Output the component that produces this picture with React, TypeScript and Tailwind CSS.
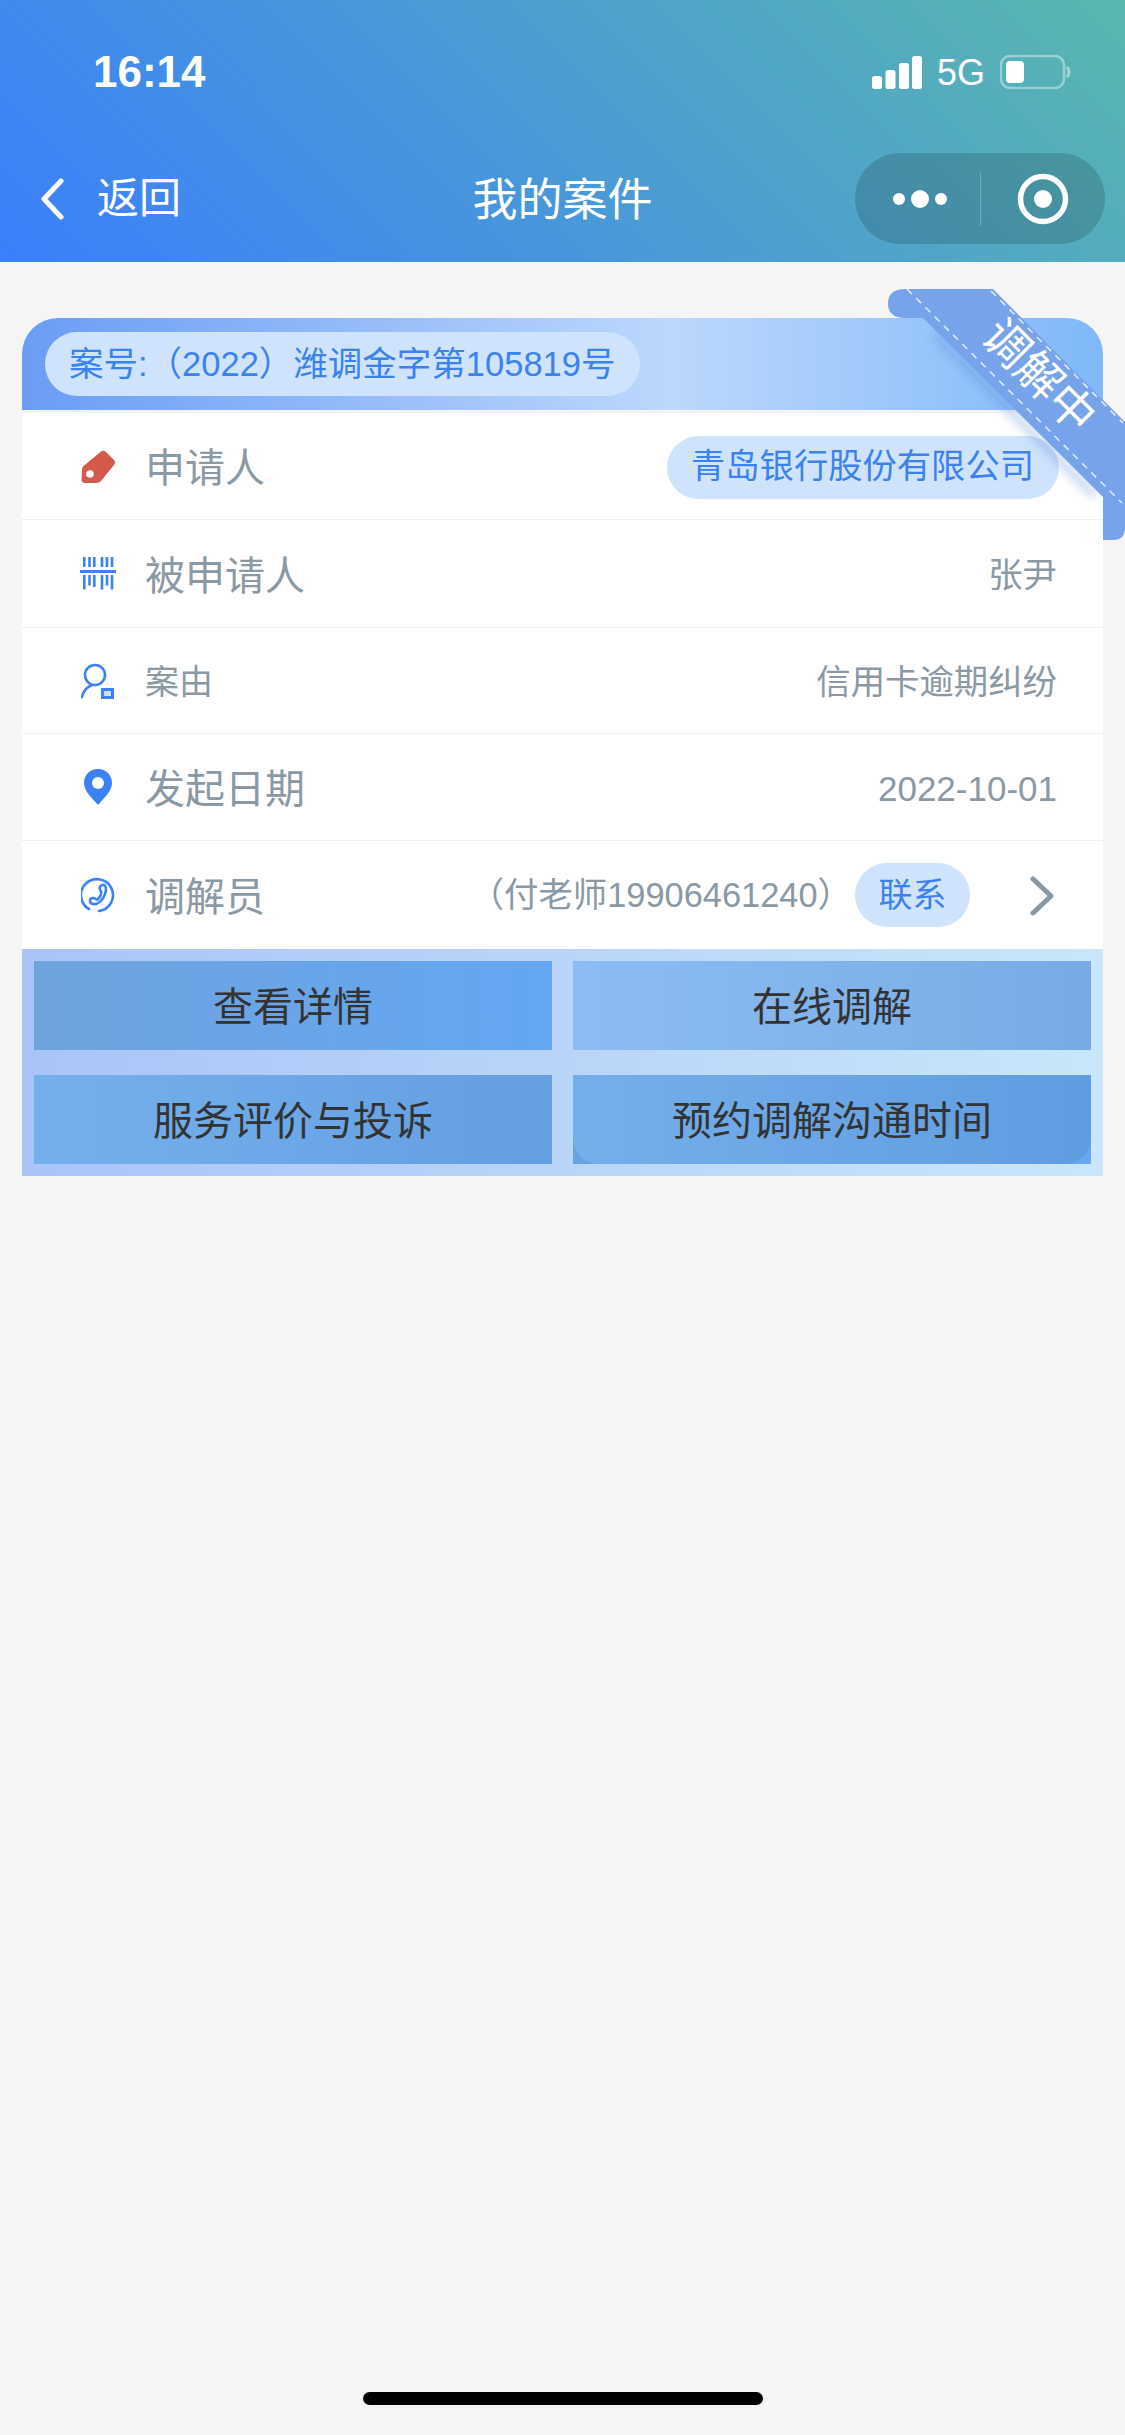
import React from "react";

const Row = ({ icon, label, labelClass, children, rowClass }: { icon: React.ReactNode; label: string; labelClass: string; children: React.ReactNode; rowClass: string }) => (
  <div className={`flex items-center justify-between pl-[60px] pr-[46px] ${rowClass}`}>
    <div className="flex items-center">
      <div className="flex w-[63px] items-center">{icon}</div>
      <span className={`relative top-[2px] text-[#8a99a3] ${labelClass}`}>{label}</span>
    </div>
    <div className="relative top-[1px] flex items-center text-[34.4px] text-[#8a99a3]">{children}</div>
  </div>
);

const Btn = ({ text, cls }: { text: string; cls: string }) => (
  <div className={`flex h-[89px] items-center justify-center pt-[2px] text-[40px] text-[#333333] ${cls}`}>{text}</div>
);

export default function App() {
  return (
    <div className="flex min-h-[2435px] flex-col bg-[#f5f5f5] font-['Liberation_Sans','Noto_Sans_CJK_SC',sans-serif]">
      <header className="h-[262px] bg-[linear-gradient(45deg,#3a7ffc,#5ab7ae)] text-white">
        <div className="flex h-[144px] items-start justify-between pl-[93px] pr-[53px] pt-[47px]">
          <span className="text-[44px] font-bold leading-[50px]">16:14</span>
          <div className="mt-[6px] flex items-center">
            <svg width="50" height="33" viewBox="0 0 50 33" fill="#fff">
              <rect x="0" y="20" width="10" height="13" rx="2.5" />
              <rect x="13.5" y="14" width="10" height="19" rx="2.5" />
              <rect x="27" y="7" width="10" height="26" rx="2.5" />
              <rect x="40" y="0" width="10" height="33" rx="2.5" />
            </svg>
            <span className="ml-[15px] mt-[2px] text-[36px] leading-[36px]">5G</span>
            <svg className="ml-[15px]" width="72" height="34" viewBox="0 0 72 34">
              <rect x="1" y="1" width="63" height="32" rx="9" fill="none" stroke="#ffffff" strokeOpacity="0.4" strokeWidth="2.5" />
              <rect x="6" y="6" width="18" height="22" rx="4" fill="#fff" />
              <path d="M67 12 q4 5 0 10" fill="none" stroke="#ffffff" strokeOpacity="0.45" strokeWidth="3" />
            </svg>
          </div>
        </div>
        <div className="grid h-[109px] grid-cols-[1fr_auto_1fr] items-start">
          <div className="flex items-center pl-[40px] pt-[30px]">
            <svg width="24" height="42" viewBox="0 0 24 42" fill="none" stroke="#fff" strokeWidth="5" strokeLinecap="round" strokeLinejoin="round">
              <path d="M21 3 L4 21 L21 39" />
            </svg>
            <span className="ml-[33px] text-[42px] leading-[50px]">返回</span>
          </div>
          <div className="pt-[31px] text-[45px] leading-[52px]">我的案件</div>
          <div className="flex justify-end pr-[20px] pt-[9px]">
            <div className="flex h-[91px] w-[250px] items-center rounded-full bg-black/15">
              <svg width="250" height="91" viewBox="0 0 250 91" fill="#fff">
                <circle cx="44" cy="46" r="6" />
                <circle cx="65" cy="46" r="9" />
                <circle cx="86" cy="46" r="6" />
                <rect x="125" y="19" width="1" height="54" fill="#ffffff" fillOpacity="0.25" />
                <circle cx="188" cy="46" r="22.5" fill="none" stroke="#fff" strokeWidth="5.5" />
                <circle cx="188" cy="46" r="9" />
              </svg>
            </div>
          </div>
        </div>
      </header>

      <main className="relative mx-[22px] mt-[56px] rounded-t-[36px] bg-white">
        <div className="flex h-[92px] items-center rounded-t-[36px] bg-[linear-gradient(90deg,#6b9df6_0%,#bcd8fc_60%,#7fb8f9_100%)] pl-[23px]">
          <div className="flex h-[64px] items-center rounded-full bg-[#cfe3fd] pl-[24px] pr-[25px] pt-[2px] text-[34.5px] text-[#3b82ee]">案号:（2022）潍调金字第105819号</div>
        </div>
        <Row
          label="申请人"
          labelClass="text-[40px]"
          rowClass="h-[110px] border-t-[3px] border-b border-t-[#f4f4f4] border-b-[#efefef]"
          icon={
            <svg className="ml-[-1px] mt-[2px]" width="35" height="34" viewBox="0 0 35 34">
              <path d="M20 1.5 Q22.5 0 25 2 L33 10 Q35 12.5 33 15 L20 31 Q18 33 15 33 L4 33 Q0.5 33 0.5 29 L1 20 Q1 17.5 2.5 16 Z" fill="#d35a4a" />
              <circle cx="9" cy="24" r="3.8" fill="#fff" />
            </svg>
          }
        >
          <div className="mr-[-2px] flex h-[63px] items-center rounded-full bg-[#cfe3fd] pl-[24px] pr-[25px] text-[34.3px] text-[#3b82ee]">青岛银行股份有限公司</div>
        </Row>
        <Row
          label="被申请人"
          labelClass="text-[40px]"
          rowClass="h-[108px] border-b border-[#efefef]"
          icon={
            <svg className="ml-[-2px]" width="36" height="34" viewBox="0 0 36 34" fill="#3b82f6">
              <rect x="0" y="13" width="36" height="3" />
              {[3, 8.2, 13, 20.7, 25.7, 30.7].map((x) => (
                <rect key={x} x={x} y="0" width="2.6" height="10" />
              ))}
              <rect x="3" y="18" width="2.6" height="14.5" />
              <rect x="8.2" y="18" width="2.6" height="10.5" />
              <rect x="13" y="18" width="2.6" height="12" />
              <rect x="20.7" y="18" width="2.6" height="14.5" />
              <rect x="25.7" y="18" width="2.6" height="10.5" />
              <rect x="30.7" y="18" width="2.6" height="14.5" />
            </svg>
          }
        >
          <span className="relative top-[1px]">张尹</span>
        </Row>
        <Row
          label="案由"
          labelClass="text-[34px]"
          rowClass="h-[106px] border-b border-[#efefef]"
          icon={
            <svg className="ml-[-1px]" width="34" height="36" viewBox="0 0 34 36" fill="none" stroke="#3b82f6" strokeWidth="2.6">
              <circle cx="14" cy="12" r="10" />
              <path d="M1 34 Q3 25 11 22" strokeLinecap="round" />
              <rect x="21.5" y="26.5" width="10" height="8" strokeWidth="3" fill="#cfe0fb" />
            </svg>
          }
        >
          <span className="relative top-[1px]">信用卡逾期纠纷</span>
        </Row>
        <Row
          label="发起日期"
          labelClass="text-[40px]"
          rowClass="h-[107px] border-b border-[#efefef]"
          icon={
            <svg className="ml-[2px]" width="28" height="36" viewBox="0 0 28 36">
              <path d="M14 0 C6 0 0 6 0 14 C0 22 8 29 14 36 C20 29 28 22 28 14 C28 6 22 0 14 0 Z" fill="#3b82f6" />
              <circle cx="14" cy="14" r="6" fill="#fff" />
            </svg>
          }
        >
          <span className="relative top-[1px] text-[35px]">2022-10-01</span>
        </Row>
        <Row
          label="调解员"
          labelClass="text-[40px]"
          rowClass="h-[108px]"
          icon={
            <svg className="ml-[-1px]" width="36" height="36" viewBox="0 0 36 36" fill="none" stroke="#3b82f6" strokeWidth="2.6" strokeLinecap="round">
              <path d="M8 32 A16 16 0 1 1 18 34" />
              <path d="M21 8 C25 7 26 12 24 17 C22 23 17 28 12 27 C8 26 8 21 12 21 C15 21 15 24 17 22 C19 20 21 16 20 14 C18 13 18 9 21 8 Z" />
            </svg>
          }
        >
          <span>（付老师19906461240）</span>
          <div className="ml-[3px] flex h-[64px] w-[115px] -translate-y-[1px] items-center justify-center rounded-full bg-[#cfe3fd] text-[34px] text-[#3b82ee]">联系</div>
          <svg className="ml-[60px] mr-[3px]" width="24" height="40" viewBox="0 0 24 40" fill="none" stroke="#8a99a3" strokeWidth="5" strokeLinecap="round" strokeLinejoin="round">
            <path d="M3 3 L21 20 L3 37" />
          </svg>
        </Row>
        <div className="grid grid-cols-2 gap-x-[21px] gap-y-[25px] bg-[linear-gradient(90deg,#a9c4f8,#c8e7fa)] p-[12px]">
          <Btn text="查看详情" cls="bg-[linear-gradient(90deg,#6fa3dd,#63a7f2)]" />
          <Btn text="在线调解" cls="bg-[linear-gradient(90deg,#8cbcf2,#78abe6)]" />
          <Btn text="服务评价与投诉" cls="bg-[linear-gradient(90deg,#75b0ed,#639fe1)]" />
          <div className="bg-[linear-gradient(90deg,#6aa2e0,#66a8f2)]">
            <Btn text="预约调解沟通时间" cls="rounded-b-[26px] bg-[linear-gradient(90deg,#75afeb,#5f9de1)]" />
          </div>
        </div>

        <svg className="absolute left-[858px] top-[-33px]" width="245" height="260" viewBox="880 285 245 260" style={{ overflow: "visible" }}>
          <defs>
            <filter id="ribbon-blur" x="-30%" y="-30%" width="160%" height="160%">
              <feGaussianBlur stdDeviation="5" />
            </filter>
          </defs>
          <line x1="935" y1="335" x2="1095" y2="496" stroke="#4f80d8" strokeOpacity="0.35" strokeWidth="8" filter="url(#ribbon-blur)" />
          <path d="M905 289 L993 289 L1125 422 L1125 528 Q1125 540 1113 540 L1103 540 L1103 497 L923 318 L905 318 Q888 318 888 303.5 Q888 289 905 289 Z" fill="#76a3ea" />
          <line x1="907" y1="289" x2="1122" y2="503" stroke="#fff" strokeOpacity="0.8" strokeWidth="1.5" strokeDasharray="7 6" />
          <line x1="991" y1="291" x2="1123" y2="423" stroke="#fff" strokeOpacity="0.8" strokeWidth="1.5" strokeDasharray="7 6" />
        </svg>
        <div className="absolute left-[937px] top-[32px] flex h-[52px] w-[160px] rotate-45 items-center justify-center text-[46px] leading-none text-white">调解中</div>
      </main>

      <div className="mt-auto flex justify-center pb-[30px]">
        <div className="h-[13px] w-[400px] rounded-full bg-black" />
      </div>
    </div>
  );
}
